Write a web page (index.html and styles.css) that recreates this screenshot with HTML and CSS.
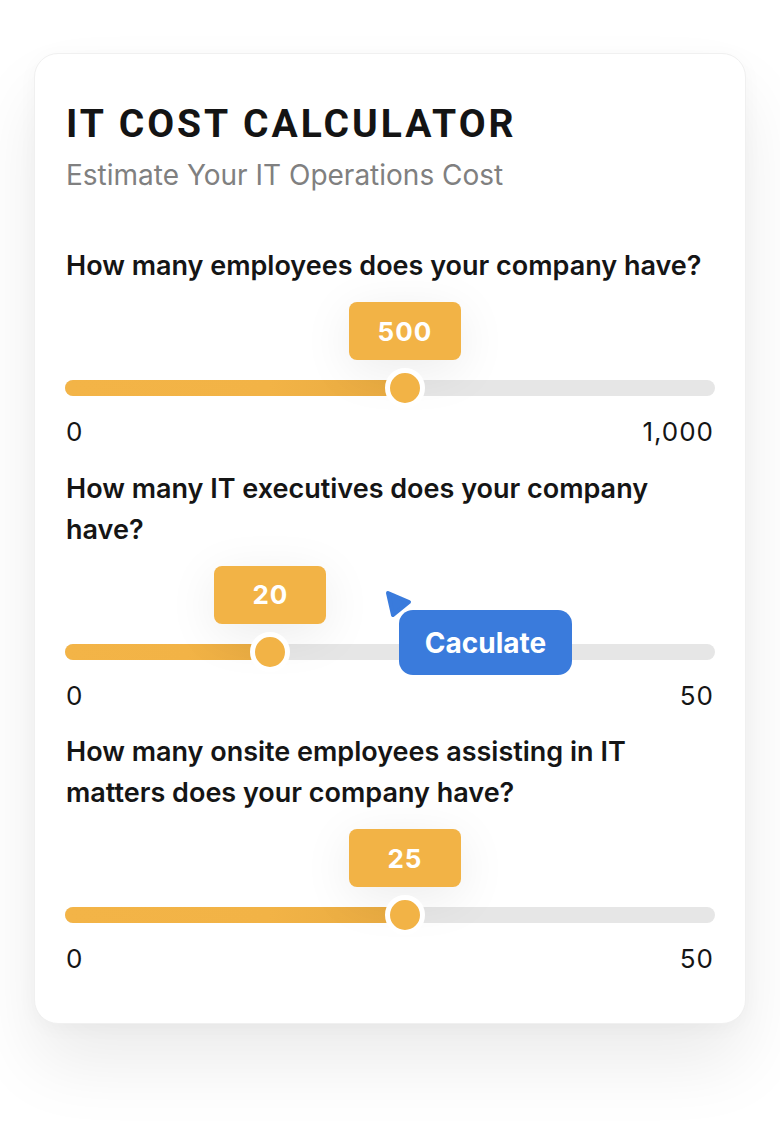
FILE: index.html
```html
<!DOCTYPE html>
<html lang="en">
<head>
<meta charset="utf-8">
<title>IT Cost Calculator</title>
<link rel="stylesheet" href="styles.css">
</head>
<body>
<div class="page">
<div class="card">
  <h1 class="title">IT COST CALCULATOR</h1>
  <p class="subtitle">Estimate Your IT Operations Cost</p>
  <div class="questions">
    <section class="question">
      <h2 class="label">How many employees does your company have?</h2>
      <div class="slider">
        <div class="track">
          <div class="fill" style="width:52.3%"></div>
          <div class="bubble" style="left:52.3%">500</div>
          <div class="thumb" style="left:52.3%"></div>
        </div>
      </div>
      <div class="range"><span>0</span><span>1,000</span></div>
    </section>
    <section class="question">
      <h2 class="label">How many IT executives does your company have?</h2>
      <div class="slider">
        <div class="track">
          <div class="fill" style="width:31.6%"></div>
          <div class="bubble" style="left:31.6%">20</div>
          <div class="thumb" style="left:31.6%"></div>
        </div>
      </div>
      <div class="range"><span>0</span><span>50</span></div>
    </section>
    <section class="question">
      <h2 class="label">How many onsite employees assisting in IT matters does your company have?</h2>
      <div class="slider">
        <div class="track">
          <div class="fill" style="width:52.3%"></div>
          <div class="bubble" style="left:52.3%">25</div>
          <div class="thumb" style="left:52.3%"></div>
        </div>
      </div>
      <div class="range"><span>0</span><span>50</span></div>
    </section>
  </div>
  <button class="calc" type="button">Caculate</button>
  <svg class="cursor" width="30" height="30" viewBox="0 0 30 30" aria-hidden="true">
    <polygon points="4,4 25,13 9,26" fill="#3a7bdc" stroke="#3a7bdc" stroke-width="4" stroke-linejoin="round"/>
  </svg>
</div>
</div>
</body>
</html>
```

FILE: styles.css
```css
* { box-sizing: border-box; }
html, body { margin: 0; padding: 0; background: #ffffff; }
body {
  font-family: "Inter", "Liberation Sans", sans-serif;
  color: #151515;
}
.page {
  min-height: 1134px;
  padding: 53px 0 0 34px;
}
.card {
  position: relative;
  width: 712px;
  height: 971px;
  padding: 46px 30px 0;
  background: #ffffff;
  border: 1px solid #f0f0f0;
  border-radius: 24px;
  box-shadow: 0 40px 70px rgba(0, 0, 0, 0.08), 0 4px 20px rgba(0, 0, 0, 0.03);
}
.title {
  margin: 0;
  font-family: "Roboto", "Inter", sans-serif;
  font-weight: 700;
  font-size: 39px;
  line-height: 48px;
  letter-spacing: 3px;
  color: #141414;
  padding-left: 1px;
}
.subtitle {
  margin: 9px 0 0;
  font-size: 28px;
  line-height: 36px;
  color: #808080;
  padding-left: 1px;
}
.questions {
  display: flex;
  flex-direction: column;
  margin-top: 52px;
  gap: 18.5px;
}
.label {
  margin: 0;
  font-size: 27px;
  font-weight: 600;
  line-height: 41px;
  color: #151515;
  padding-left: 1px;
}
.slider {
  padding-top: 94px;
}
.track {
  position: relative;
  height: 16px;
  border-radius: 8px;
  background: #e6e6e6;
}
.fill {
  height: 100%;
  border-radius: 8px;
  background: linear-gradient(90deg, #f3b447 0%, #f2b346 60%, #e8ab42 100%);
}
.thumb {
  position: absolute;
  top: 50%;
  width: 40px;
  height: 40px;
  transform: translate(-50%, -50%);
  border-radius: 50%;
  background: #f2b346;
  border: 5px solid #ffffff;
}
.bubble {
  position: absolute;
  bottom: calc(100% + 20px);
  width: 112px;
  height: 58px;
  transform: translateX(-50%);
  border-radius: 8px;
  background: #f2b346;
  color: #ffffff;
  font-weight: 700;
  font-size: 26px;
  letter-spacing: 1px;
  display: flex;
  align-items: center;
  justify-content: center;
  box-shadow: 0 10px 50px rgba(0, 0, 0, 0.08);
}
.range {
  display: flex;
  justify-content: space-between;
  margin-top: 19px;
  font-size: 26px;
  line-height: 34px;
  letter-spacing: 1px;
  color: #151515;
  padding: 0 1px;
}
.calc {
  position: absolute;
  left: 364px;
  top: 556px;
  width: 173px;
  height: 65px;
  border: none;
  border-radius: 14px;
  background: #3a7bdc;
  color: #ffffff;
  font-family: "Inter", sans-serif;
  font-weight: 700;
  font-size: 28px;
}
.cursor {
  position: absolute;
  left: 349px;
  top: 535px;
}
```
